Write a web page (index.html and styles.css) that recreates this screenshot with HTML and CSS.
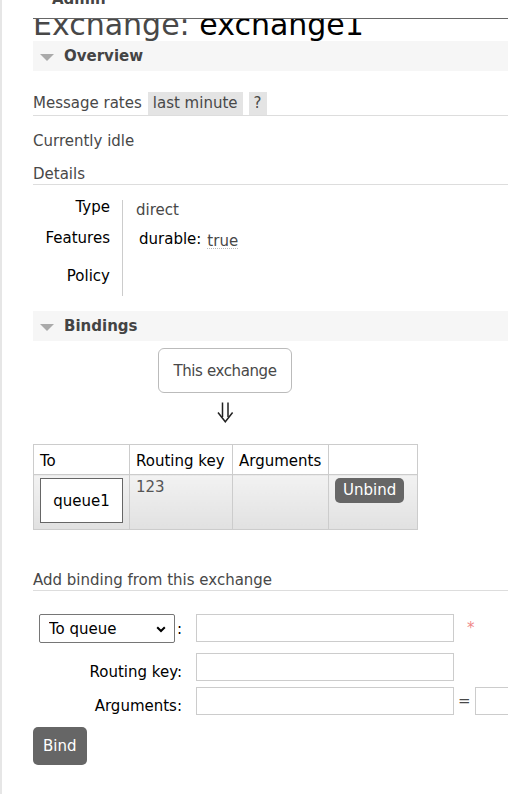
FILE: index.html
```html
<!DOCTYPE html>
<html lang="en">
<head>
<meta charset="utf-8">
<title>Exchange: exchange1</title>
<link rel="stylesheet" href="styles.css">
</head>
<body>
<div class="page">
  <header class="topnav"><span class="tab">Admin</span></header>
  <main class="main">
    <h1 class="title">Exchange: <b>exchange1</b></h1>

    <section class="section">
      <h2 class="bar"><span class="tri"></span>Overview</h2>
      <div class="rates">
        <span>Message rates</span>
        <span class="chip">last minute</span>
        <span class="chip">?</span>
      </div>
      <p class="idle">Currently idle</p>
      <h3 class="sub">Details</h3>
      <div class="details">
        <div class="lbl row1">Type</div>
        <div class="val row1">direct</div>
        <div class="lbl row2">Features</div>
        <div class="val row2"><span class="key">durable:</span><span class="flag">true</span></div>
        <div class="lbl row3">Policy</div>
        <div class="val row3"></div>
      </div>
    </section>

    <section class="section bindings">
      <h2 class="bar"><span class="tri"></span>Bindings</h2>
      <div class="source">This exchange</div>
      <div class="arrow">
        <svg width="17" height="21" viewBox="0 0 17 21" aria-hidden="true">
          <path d="M5.5 0.5V15M11 0.5V15" stroke="#222" stroke-width="1.5" fill="none"/>
          <path d="M1 10.5L8.3 19.8L15.6 10.5" stroke="#222" stroke-width="1.5" fill="none"/>
        </svg>
      </div>
      <table class="list">
        <colgroup>
          <col class="c1"><col class="c2"><col class="c3"><col class="c4">
        </colgroup>
        <thead>
          <tr><th>To</th><th>Routing key</th><th>Arguments</th><th></th></tr>
        </thead>
        <tbody>
          <tr>
            <td><span class="dest">queue1</span></td>
            <td>123</td>
            <td></td>
            <td><button class="btn small">Unbind</button></td>
          </tr>
        </tbody>
      </table>

      <h3 class="sub addhead">Add binding from this exchange</h3>
      <form class="form">
        <div class="frow r1">
          <div class="flabel">
            <span class="selwrap">
              <select class="sel"><option>To queue</option><option>To exchange</option></select>
              <svg class="chev" width="10" height="7" viewBox="0 0 10 7" aria-hidden="true">
                <path d="M1.2 1.2L5 5L8.8 1.2" stroke="#000" stroke-width="2" fill="none"/>
              </svg>
            </span><span class="colon">:</span>
          </div>
          <input class="inp" type="text">
          <span class="req">*</span>
        </div>
        <div class="frow r2">
          <label class="flabel">Routing key:</label>
          <input class="inp" type="text">
        </div>
        <div class="frow r3">
          <label class="flabel">Arguments:</label>
          <input class="inp" type="text">
          <span class="eq">=</span>
          <input class="inp" type="text">
        </div>
        <button class="btn big" type="button">Bind</button>
      </form>
    </section>
  </main>
</div>
</body>
</html>
```

FILE: styles.css
```css
html, body {
  margin: 0;
  padding: 0;
  background: #fff;
  overflow: hidden;
}

body {
  font-family: "DejaVu Sans", Verdana, sans-serif;
  font-size: 15px;
  line-height: 18px;
  color: #484848;
}

.page {
  position: relative;
  min-height: 794px;
  box-sizing: border-box;
  border-left: 2px solid #e6e6e6;
  padding-left: 31px;
}

/* fixed nav strip overlapping the top of the page */
.topnav {
  position: absolute;
  top: 0;
  left: 31px;
  right: 0;
  height: 18px;
  background: #fff;
  border-bottom: 1px solid #666;
  overflow: hidden;
}

.tab {
  display: block;
  margin: -10px 0 0 19px;
  font-weight: bold;
  color: #444;
  line-height: 18px;
}

.title {
  margin: 0;
  padding-top: 8px;
  font-size: 30px;
  line-height: 33px;
  font-weight: normal;
  color: #484848;
  white-space: nowrap;
}

.title b {
  font-weight: normal;
  color: #000;
}

.bar {
  display: flex;
  align-items: center;
  height: 30px;
  margin: 0;
  padding-left: 7px;
  background: #f6f6f6;
  font-size: 15px;
  font-weight: bold;
  color: #444;
}

.tri {
  width: 0;
  height: 0;
  margin: 2px 10px 0 0;
  border-left: 7px solid transparent;
  border-right: 7px solid transparent;
  border-top: 7px solid #aaa;
}

.rates {
  display: flex;
  margin-top: 21px;
  line-height: 23px;
  border-bottom: 1px solid #ddd;
}

.chip {
  margin-left: 6px;
  padding: 0 5px;
  background: #e4e4e4;
}

.rates .chip:first-of-type {
  margin-left: 4px;
}

.idle {
  margin: 16px 0 0;
}

.sub {
  margin: 15px 0 0;
  padding-bottom: 1px;
  font-size: 15px;
  font-weight: normal;
  border-bottom: 1px solid #ddd;
}

.details {
  display: grid;
  grid-template-columns: 89px auto;
  grid-template-rows: 30px 34px 32px;
  margin-top: 15px;
  line-height: 14px;
}

.lbl {
  padding-right: 12px;
  text-align: right;
  color: #000;
}

.val {
  border-left: 1px solid #ccc;
  padding-left: 13px;
}

.lbl.row1 { padding-top: 0; }
.lbl.row2 { padding-top: 1px; }
.lbl.row3 { padding-top: 5px; }
.val.row1 { padding-top: 3px; }
.val.row2 { padding-top: 2px; display: flex; align-items: flex-start; }

.key {
  margin-left: 3px;
  color: #000;
}

.flag {
  margin: 2px 0 0 6px;
  border-bottom: 1px dotted #bbb;
}

.bindings .bar {
  margin-top: 15px;
}

.source {
  width: 132px;
  margin: 7px 0 0 125px;
  padding: 13px 0 12px;
  border: 1px solid #bbb;
  border-radius: 6px;
  text-align: center;
  white-space: nowrap;
  letter-spacing: -0.4px;
}

.arrow {
  display: flex;
  justify-content: center;
  width: 134px;
  height: 21px;
  margin: 9px 0 0 125px;
}

.list {
  margin-top: 21px;
  border-collapse: collapse;
  table-layout: fixed;
  width: 384px;
  border: 1px solid #ccc;
}

.c1 { width: 96px; }
.c2 { width: 103px; }
.c3 { width: 96px; }
.c4 { width: 89px; }

.list th {
  padding: 7px 6px 4px;
  border: 1px solid #ccc;
  font-weight: normal;
  text-align: left;
  color: #000;
  white-space: nowrap;
}

.list td {
  padding: 3px 6px 6px;
  border: 1px solid #ccc;
  vertical-align: top;
  background: linear-gradient(#f2f2f2, #e1e1e1);
  color: #555;
}

.dest {
  display: block;
  width: 81px;
  padding: 13px 0 12px;
  border: 1px solid #666;
  background: #fff;
  color: #000;
  text-align: center;
}

.btn {
  border: 0;
  border-radius: 5px;
  background: #666;
  color: #fff;
  font-family: inherit;
  font-size: 15px;
  padding: 0;
  margin: 0;
  cursor: pointer;
}

.btn.small {
  height: 25px;
  padding: 0 8px;
  line-height: 25px;
}

.btn.big {
  display: block;
  height: 38px;
  margin-top: 12px;
  padding: 0 10px;
  line-height: 38px;
}

.addhead {
  margin-top: 41px;
}

.form {
  margin: 23px 0 0;
}

.frow {
  display: flex;
  align-items: flex-end;
}

.frow.r1 { align-items: flex-start; }
.frow.r2 { margin-top: 10px; }
.frow.r3 { margin-top: 6px; }

.flabel {
  flex: none;
  width: 149px;
  margin-right: 14px;
  text-align: right;
  color: #000;
  white-space: nowrap;
}

.r1 .flabel {
  display: flex;
  justify-content: flex-end;
  align-items: center;
  height: 29px;
}

.selwrap {
  position: relative;
  display: inline-flex;
  margin-right: 2px;
}

.sel {
  -webkit-appearance: none;
  appearance: none;
  box-sizing: border-box;
  width: 136px;
  height: 29px;
  margin: 0;
  padding: 0 0 0 9px;
  border: 1px solid #767676;
  border-radius: 2px;
  background: #fff;
  font-family: inherit;
  font-size: 15px;
  color: #000;
}

.chev {
  position: absolute;
  right: 9px;
  top: 12px;
  pointer-events: none;
}

.colon {
  color: #000;
}

.inp {
  flex: none;
  box-sizing: border-box;
  width: 258px;
  height: 28px;
  margin: 0;
  padding: 0 4px;
  border: 1px solid #ccc;
  border-radius: 0;
  background: #fff;
  font-family: inherit;
  font-size: 15px;
}

.req {
  margin-left: 13px;
  line-height: 28px;
  color: #f08888;
}

.eq {
  align-self: center;
  margin: 0 4px 0 4px;
  line-height: 18px;
  color: #484848;
}
```
